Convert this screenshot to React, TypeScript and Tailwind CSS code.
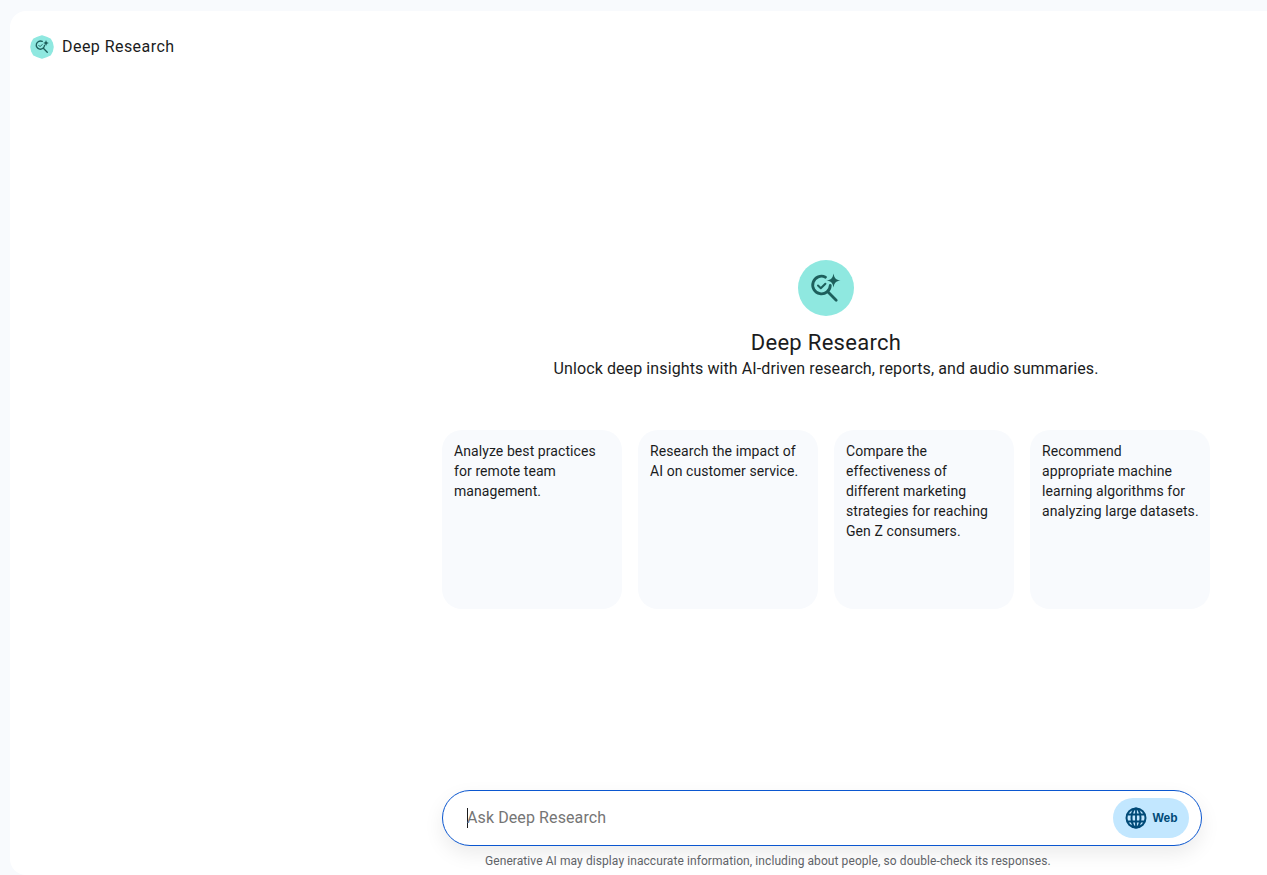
// line breaks follow the reference, the fallback font would wrap them differently
const PROMPTS = [
  "Analyze best practices\nfor remote team\nmanagement.",
  "Research the impact of\nAI on customer service.",
  "Compare the\neffectiveness of\ndifferent marketing\nstrategies for reaching\nGen Z consumers.",
  "Recommend\nappropriate machine\nlearning algorithms for\nanalyzing large datasets.",
]

// magnifier with a check inside and a sparkle top right
function ResearchIcon({ className }: { className?: string }) {
  return (
    <svg viewBox="0 0 32 32" fill="none" className={className}>
      <path
        d="M15.500 5.200a8.800 8.800 0 1 0 4.800 8.200"
        stroke="currentColor"
        strokeWidth="2.800"
        strokeLinecap="round"
      />
      <path d="M8 13.500l2.800 2.800 4.600-4.600" stroke="currentColor" strokeWidth="2" strokeLinecap="round" strokeLinejoin="round" />
      <path d="M17.800 19.800l8.400 8.400" stroke="currentColor" strokeWidth="2.800" strokeLinecap="round" />
      <path
        d="M23.500 1.500c.8 4.700 2.300 6.200 7 7-4.700.8-6.200 2.300-7 7-.8-4.700-2.300-6.200-7-7 4.700-.8 6.200-2.300 7-7z"
        fill="currentColor"
      />
    </svg>
  )
}

// soft 10-sided badge behind the header icon
function BadgeShape({ className }: { className?: string }) {
  return (
    <svg viewBox="0 0 24 24" className={className}>
      <path
        fill="currentColor"
        stroke="currentColor"
        strokeWidth="1.500"
        strokeLinejoin="round"
        d="M12 1l4.400 1.500 3.800 1.700 2 3.600.8 4.200-.8 4.200-2 3.600-3.800 1.700-4.400 1.500-4.400-1.500-3.800-1.700-2-3.600L1 12l.8-4.200 2-3.600 3.800-1.700z"
      />
    </svg>
  )
}

function GlobeIcon({ className }: { className?: string }) {
  return (
    <svg viewBox="0 0 24 24" fill="none" stroke="currentColor" strokeWidth="2" className={className}>
      <circle cx="12" cy="12" r="9.500" />
      <ellipse cx="12" cy="12" rx="4.500" ry="9.500" />
      <path d="M3.500 8.500h17M3.500 15.500h17M12 2.500v19" strokeWidth="1.800" />
    </svg>
  )
}

export default function App() {
  return (
    <div className="h-[875px] overflow-hidden bg-[#f8fafd] pl-[10px] pt-[11px] font-['Roboto',sans-serif] text-[#1b1c1d]">
      <div className="flex h-full flex-col rounded-tl-2xl rounded-bl-2xl bg-white">
        <header className="flex h-[71px] items-center gap-[8px] pl-[20px]">
          <div className="relative flex h-[24px] w-[24px] items-center justify-center text-[#8fe8e0]">
            <BadgeShape className="absolute inset-0" />
            <ResearchIcon className="relative h-[15px] w-[15px] text-[#1d5f5c]" />
          </div>
          <span className="text-[16px] tracking-[0.45px]">Deep Research</span>
        </header>

        <main className="ml-[432px] flex flex-1 flex-col">
          <section className="mt-[178px] flex w-[768px] flex-col items-center">
            <div className="flex h-[56px] w-[56px] items-center justify-center rounded-full bg-[#8fe8e0] text-[#1d5f5c]">
              <ResearchIcon className="h-[32px] w-[32px]" />
            </div>
            <h1 className="mt-[12px] text-[22px] leading-[30px] tracking-[0.3px]">Deep Research</h1>
            <p className="text-[16px] leading-[22px] tracking-[0.1px]">
              Unlock deep insights with AI-driven research, reports, and audio summaries.
            </p>
          </section>

          <section className="mt-[50px] flex gap-[16px]">
            {PROMPTS.map((p) => (
              <div
                key={p}
                className="h-[179px] w-[180px] whitespace-pre rounded-[20px] bg-[#f8fafd] px-[12px] pt-[11px] text-[14px] leading-[20px] tracking-[0.08px]"
              >
                {p}
              </div>
            ))}
          </section>

          <div className="mt-[181px] flex h-[56px] w-[760px] items-center rounded-full border border-[#0b57d0] bg-white pl-[24px] pr-[12px] shadow-[0_8px_20px_rgba(0,0,0,0.08)]">
            <span className="h-[20px] w-px bg-[#1b1c1d]" />
            <input
              placeholder="Ask Deep Research"
              className="-ml-px min-w-0 flex-1 bg-transparent text-[16px] tracking-[0.1px] outline-none placeholder:text-[#757575]"
            />
            <button className="flex h-[40px] w-[76px] items-center justify-center gap-[4px] rounded-full bg-[#c2e7ff] font-['Liberation_Sans',sans-serif] text-[12px] font-bold text-[#004a77]">
              <GlobeIcon className="h-[24px] w-[24px]" />
              Web
            </button>
          </div>
          <p className="ml-[43px] mt-[7px] text-[12px] leading-[16px] tracking-[0.08px] text-[#5f6368]">
            Generative AI may display inaccurate information, including about people, so double-check its responses.
          </p>
        </main>
      </div>
    </div>
  )
}
